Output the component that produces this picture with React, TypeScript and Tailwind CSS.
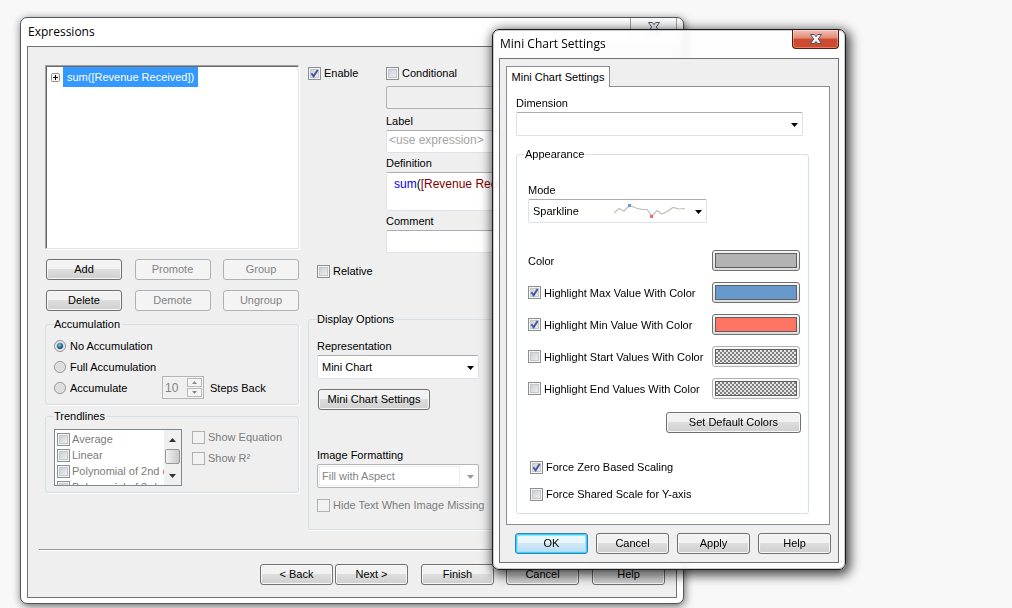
import React, { useId } from "react";

type CheckProps = {
  label: string;
  checked?: boolean;
  disabled?: boolean;
  framed?: boolean;
};

function Check({ label, checked = false, disabled = false, framed = false }: CheckProps) {
  return (
    <label
      className={
        framed
          ? "flex h-4 items-center gap-0.5 whitespace-nowrap text-[#7c7c7c]"
          : disabled
            ? "flex h-4 items-center gap-[3px] whitespace-nowrap text-[#7c7c7c]"
            : "flex h-4 items-center gap-[3px] whitespace-nowrap"
      }
    >
      <span className="grid size-[13px] shrink-0">
        <input
          type="checkbox"
          defaultChecked={checked}
          disabled={disabled}
          className={
            disabled && !framed
              ? "peer col-start-1 row-start-1 size-[13px] appearance-none border border-[#b1b1b1] bg-[#f2f2f2]"
              : "peer col-start-1 row-start-1 size-[13px] appearance-none border border-[#8e8f8f] bg-linear-to-br from-[#c3c9d1] to-[#f6f6f6] shadow-[inset_0_0_0_1px_#f4f4f4,inset_0_0_0_2px_#c4c8cc]"
          }
        />
        <svg
          viewBox="0 0 13 13"
          className="pointer-events-none invisible col-start-1 row-start-1 size-[13px] peer-checked:visible"
          aria-hidden="true"
        >
          <path d="M3.4 6.2 L5.6 9.2 L9.6 2.9" fill="none" stroke="#3f55a0" strokeWidth="1.9" />
        </svg>
      </span>
      {label}
    </label>
  );
}

function Radio({ label, checked = false }: { label: string; checked?: boolean }) {
  return (
    <label className="flex h-[21px] items-center gap-1 whitespace-nowrap">
      <input
        type="radio"
        name="accumulation"
        defaultChecked={checked}
        className="size-3 shrink-0 appearance-none rounded-full border border-[#8e8f8f] bg-[radial-gradient(circle,#d3d7da_0,#f0f0f0_70%)] shadow-[inset_0_0_0_1px_#f4f4f4,inset_0_0_0_2px_#d2d4d6] checked:bg-[radial-gradient(circle_at_45%_42%,#7fd0ee_0,#1f6f9f_30%,#123a59_48%,#e4e6e8_56%)]"
      />
      {label}
    </label>
  );
}

function Push({
  children,
  disabled = false,
  primary = false,
  className = "",
}: {
  children: React.ReactNode;
  disabled?: boolean;
  primary?: boolean;
  className?: string;
}) {
  const look = primary
    ? "border-[#3c7fb1] bg-linear-to-b from-[#eaf6fd] from-45% via-[#d0e8f5] via-50% to-[#b5dcf2] shadow-[inset_0_0_0_1px_#2bd5fb,inset_0_0_0_2px_#9be6fa]"
    : disabled
      ? "border-[#adb2b5] bg-[#f4f4f4] text-[#838383]"
      : "border-[#707070] bg-linear-to-b from-[#f2f2f2] from-45% via-[#dddddd] via-50% to-[#cfcfcf] shadow-[inset_0_0_0_1px_#f8f8f8]";
  return (
    <button
      type="button"
      disabled={disabled}
      className={`h-[21px] rounded-[3px] border text-center leading-[19px] whitespace-nowrap ${look} ${className}`}
    >
      {children}
    </button>
  );
}

function Arrow({ muted = false }: { muted?: boolean }) {
  return (
    <svg
      viewBox="0 0 7 4"
      className="pointer-events-none absolute top-[11px] right-[5px] h-1 w-[7px]"
      fill={muted ? "#9a9a9a" : "#000"}
      aria-hidden="true"
    >
      <path d="M0 0H7L3.5 4Z" />
    </svg>
  );
}

function Combo({
  label,
  value,
  disabled = false,
  className = "",
  children,
}: {
  label: string;
  value: string;
  disabled?: boolean;
  className?: string;
  children?: React.ReactNode;
}) {
  const id = useId();
  return (
    <div className={className}>
      <label htmlFor={id} className="block h-[17px] leading-4">
        {label}
      </label>
      <div className="relative">
        <select
          id={id}
          disabled={disabled}
          className={
            disabled
              ? "block h-6 w-full appearance-none rounded-[2px] border border-[#b1b5b8] bg-white pl-1 text-[#838383] opacity-100"
              : "block h-6 w-full appearance-none rounded-[2px] border border-[#dde2ea] border-t-[#abadb3] bg-white pl-1"
          }
        >
          <option>{value}</option>
        </select>
        {disabled && (
          <span className="pointer-events-none absolute inset-y-0.5 right-[19px] left-0.5 border border-[#ececec]" />
        )}
        {children}
        <Arrow muted={disabled} />
      </div>
    </div>
  );
}

function Swatch({ label, color, disabled = false }: { label: string; color: string; disabled?: boolean }) {
  return (
    <button
      type="button"
      aria-label={label}
      disabled={disabled}
      className={
        disabled
          ? "h-[21px] w-[88px] rounded-[3px] border border-[#adb2b5] bg-[#f8f8f8] p-0.5"
          : "h-[21px] w-[88px] rounded-[3px] border border-[#707070] bg-linear-to-b from-[#f6f6f6] to-[#dcdcdc] p-0.5"
      }
    >
      <span className={`block h-[15px] border border-[#5f5f5f] ${color}`} />
    </button>
  );
}

const hatch = "bg-[repeating-conic-gradient(#808080_0_25%,#e4e4e4_0_50%)] bg-size-[4px_4px]";

const swatches = [
  { label: "Highlight Max Value With Color", color: "bg-[#6899cc]", on: true },
  { label: "Highlight Min Value With Color", color: "bg-[#ff7462]", on: true },
  { label: "Highlight Start Values With Color", color: hatch, on: false },
  { label: "Highlight End Values With Color", color: hatch, on: false },
];

function CloseGlyph() {
  return (
    <svg viewBox="0 0 12 10" className="h-2.5 w-3" aria-hidden="true">
      <path
        d="M.5 .5H4.300L6 2.600L7.700 .5H11.500L8.300 5L11.500 9.500H7.700L6 7.400L4.300 9.500H.5L3.700 5Z"
        fill="#f4f4f4"
        stroke="#4f5468"
        strokeWidth="1"
        strokeLinejoin="round"
      />
    </svg>
  );
}

const groupBox = "rounded-[3px] border border-[#d5dfe5] shadow-[1px_1px_0_#fff]";
const field = "block w-full rounded-[2px] border border-[#dde2ea] border-t-[#abadb3] bg-white";

function TextField({ label, placeholder = "" }: { label: string; placeholder?: string }) {
  const id = useId();
  return (
    <div className="mt-0.5">
      <label htmlFor={id} className="block h-[17px] leading-4">
        {label}
      </label>
      <input
        id={id}
        placeholder={placeholder}
        className={`${field} h-[23px] px-0.5 pb-[3px] text-[12px] placeholder:text-[#a5a5a5]`}
      />
    </div>
  );
}

function ExpressionsWindow() {
  return (
    <section
      aria-label="Expressions"
      className="absolute top-[17px] left-[20px] w-[664px] rounded-[7px] border border-[#55585b] bg-white px-[6px] pb-[5px] shadow-[1px_2px_8px_rgba(0,0,0,0.6)]"
    >
      <header className="flex h-7 items-start justify-between pl-px">
        <h1 className="font-['Open_Sans',sans-serif] text-[12px] leading-[27px]">Expressions</h1>
        <button
          type="button"
          aria-label="Close"
          className="flex h-[18px] w-[47px] items-center justify-center rounded-b-[4px] border border-t-0 border-[#a0a0a0] bg-[#fcfcfc]"
        >
          <CloseGlyph />
        </button>
      </header>

      <div className="border border-[#6f7173] bg-[#efefef] pb-3">
        <div className="flex gap-[9px] pt-[18px] pr-[10px] pl-[17px]">
          <div className="w-[254px]">
            <div className="flex h-[184px] items-start gap-px border border-t-[#a0a0a0] border-r-[#e3e3e3] border-b-[#e3e3e3] border-l-[#a0a0a0] bg-white pt-px pl-[5px] shadow-[inset_1px_1px_0_#696969,1px_1px_0_#fff]">
              <button type="button" aria-label="Expand" className="mt-1.5 mr-0.5 size-[9px]">
                <svg viewBox="0 0 9 9" className="size-[9px]" aria-hidden="true">
                  <rect x=".5" y=".5" width="8" height="8" rx="1" fill="#f2f2f2" stroke="#919191" />
                  <path d="M2 4.5H7M4.5 2V7" stroke="#000" fill="none" />
                </svg>
              </button>
              <button
                type="button"
                className="h-5 bg-[#3399ff] px-1 text-left leading-5 text-white"
              >
                sum([Revenue Received])
              </button>
            </div>

            <div className="mt-2.5 ml-px grid grid-cols-[76px_76px_76px] justify-between gap-y-2.5">
              <Push>Add</Push>
              <Push disabled>Promote</Push>
              <Push disabled>Group</Push>
              <Push>Delete</Push>
              <Push disabled>Demote</Push>
              <Push disabled>Ungroup</Push>
            </div>

            <fieldset className={`mt-[5px] px-2 pt-[3px] pb-1.5 ${groupBox}`}>
              <legend className="pr-0.5 leading-4">Accumulation</legend>
              <Radio label="No Accumulation" checked />
              <Radio label="Full Accumulation" />
              <div className="flex h-[21px] items-center">
                <div className="w-[108px]">
                  <Radio label="Accumulate" />
                </div>
                <div className="flex h-[23px] w-[42px] border border-[#b1b5b8] bg-[#f4f4f4] p-px">
                  <input
                    aria-label="Steps Back"
                    defaultValue="10"
                    disabled
                    className="w-[23px] min-w-0 bg-[#efefef] pl-px text-[12px] text-[#838383]"
                  />
                  <div className="flex flex-col justify-between">
                    <button
                      type="button"
                      disabled
                      aria-label="More steps"
                      className="flex h-[9px] w-[15px] items-center justify-center border border-[#b9b9b9]"
                    >
                      <svg viewBox="0 0 5 3" className="h-[3px] w-[5px]" aria-hidden="true">
                        <path d="M0 3H5L2.5 0Z" fill="#8a8a8a" />
                      </svg>
                    </button>
                    <button
                      type="button"
                      disabled
                      aria-label="Fewer steps"
                      className="flex h-[9px] w-[15px] items-center justify-center border border-[#b9b9b9]"
                    >
                      <svg viewBox="0 0 5 3" className="h-[3px] w-[5px]" aria-hidden="true">
                        <path d="M0 0H5L2.5 3Z" fill="#8a8a8a" />
                      </svg>
                    </button>
                  </div>
                </div>
                <span className="pl-1.5">Steps Back</span>
              </div>
            </fieldset>

            <fieldset className={`mt-[3px] flex items-start gap-2.5 px-2 pt-[5px] pb-1.5 ${groupBox}`}>
              <legend className="pr-0.5 leading-4">Trendlines</legend>
              <div className="flex h-[57px] w-32 overflow-hidden border border-[#828790] bg-white">
                <div className="flex-1 overflow-hidden pt-px pl-0.5">
                  <Check label="Average" disabled framed />
                  <Check label="Linear" disabled framed />
                  <Check label="Polynomial of 2nd degree" disabled framed />
                  <Check label="Polynomial of 3rd degree" disabled framed />
                </div>
                <div className="flex w-[17px] flex-col items-center bg-[#f0f0f0]">
                  <svg viewBox="0 0 7 4" className="mt-2 h-1 w-[7px]" aria-hidden="true">
                    <path d="M0 4H7L3.5 0Z" fill="#333" />
                  </svg>
                  <span className="mt-[7px] block h-[15px] w-[15px] rounded-[2px] border border-[#979797] bg-linear-to-r from-[#f4f4f4] to-[#c8c8c8]" />
                  <svg viewBox="0 0 7 4" className="mt-2.5 h-1 w-[7px]" aria-hidden="true">
                    <path d="M0 0H7L3.5 4Z" fill="#333" />
                  </svg>
                </div>
              </div>
              <div className="flex flex-col gap-[5px]">
                <Check label="Show Equation" disabled />
                <Check label="Show R²" disabled />
              </div>
            </fieldset>
          </div>

          <div className="flex-1">
            <div className="flex">
              <div className="w-[78px]">
                <Check label="Enable" checked />
              </div>
              <div className="flex-1">
                <Check label="Conditional" />
                <input
                  aria-label="Condition"
                  disabled
                  className="mt-[5px] mb-1 block h-[23px] w-full rounded-[2px] border border-[#afb1b4] bg-[#efefef]"
                />
                <TextField label="Label" placeholder="<use expression>" />
                <div className="mt-0.5">
                  <span id="definition-label" className="block h-[17px] leading-4">
                    Definition
                  </span>
                  <div
                    role="textbox"
                    aria-labelledby="definition-label"
                    contentEditable
                    suppressContentEditableWarning
                    className={`${field} h-[39px] overflow-hidden pt-0.5 pl-[7px] text-[12px] leading-[18px] whitespace-nowrap`}
                  >
                    <span className="text-[#0000ff]">sum</span>(
                    <span className="text-[#800000]">[Revenue Received]</span>)
                  </div>
                </div>
                <TextField label="Comment" />
              </div>
            </div>

            <div className="mt-2.5 pl-[9px]">
              <Check label="Relative" />
            </div>

            <fieldset className={`mt-8 px-2 pt-[11px] pb-4 ${groupBox}`}>
              <legend className="pr-px leading-4">Display Options</legend>
              <Combo label="Representation" value="Mini Chart" className="w-[162px]" />
              <Push className="mt-2.5 ml-px w-28">Mini Chart Settings</Push>
              <Combo
                label="Image Formatting"
                value="Fill with Aspect"
                disabled
                className="mt-[37px] mb-[9px] w-[162px]"
              />
              <Check label="Hide Text When Image Missing" disabled />
            </fieldset>
          </div>
        </div>

        <hr className="mt-[19px] mr-[10px] ml-[11px] border-t border-[#9a9a9a] shadow-[0_1px_0_#fff]" />

        <div className="mt-3.5 flex justify-end pr-[11px]">
          <Push className="w-[73px]">&lt; Back</Push>
          <Push className="ml-0.5 w-[73px]">Next &gt;</Push>
          <Push className="ml-[13px] w-[73px]">Finish</Push>
          <Push className="ml-3 w-[73px]">Cancel</Push>
          <Push className="ml-[13px] w-[73px]">Help</Push>
        </div>
      </div>
    </section>
  );
}

function MiniChartWindow() {
  return (
    <section
      role="dialog"
      aria-label="Mini Chart Settings"
      className="absolute top-[29px] left-[492px] w-[354px] rounded-[7px] border border-[#1c1d1e] bg-white/85 px-1.5 pb-1.5 shadow-[inset_0_0_0_1px_#c9cbcd,2px_3px_12px_2px_rgba(0,0,0,0.75)] backdrop-blur-[3px]"
    >
      <header className="flex h-7 items-start justify-between pl-px">
        <h2 className="font-['Open_Sans',sans-serif] text-[12px] leading-[28px]">Mini Chart Settings</h2>
        <button
          type="button"
          aria-label="Close"
          className="flex h-[19px] w-[47px] items-center justify-center rounded-b-[4px] border border-t-0 border-[#5a1a12] bg-linear-to-b from-[#f3c0b4] from-0% via-[#e08a78] via-45% to-[#cf4a30] to-50% shadow-[inset_0_0_0_1px_rgba(255,255,255,0.3)]"
        >
          <CloseGlyph />
        </button>
      </header>

      <div className="border border-[#6f7173] bg-[#efefef] px-1.5 pt-[7px] pb-2">
        <div role="tablist" className="flex">
          <button
            type="button"
            role="tab"
            aria-selected="true"
            className="z-10 -mb-px h-[21px] w-[104px] border border-b-0 border-[#8b8d93] bg-white text-center leading-[19px] whitespace-nowrap"
          >
            Mini Chart Settings
          </button>
        </div>
        <div role="tabpanel" className="mr-0.5 border border-[#8b8d93] bg-white px-[9px] pt-2 pb-2.5">
          <Combo label="Dimension" value="" className="w-[287px]" />

          <fieldset className="mt-2.5 w-[293px] rounded-[3px] border border-[#d5dfe5] pr-2 pb-[11px] pl-[11px]">
            <legend className="-ml-1 px-px leading-4">Appearance</legend>
            <Combo label="Mode" value="Sparkline" className="mt-5 w-[179px]">
              <svg
                viewBox="0 0 72 16"
                className="pointer-events-none absolute top-1 right-[21px] h-4 w-[72px]"
                aria-hidden="true"
              >
                <path
                  d="M0 10L5 5.500L10 8L15.500 2.500L22 5L28 6.500L33 6.500L38 13L43 7.500L48 11L54 8L59 4.500L65 6L71 5.500"
                  fill="none"
                  stroke="#bdbdbd"
                  strokeWidth="1.2"
                />
                <rect x="14" y="1" width="3" height="3" fill="#6899cc" />
                <rect x="36" y="12" width="3" height="3" fill="#ff6a58" />
              </svg>
            </Combo>

            <div className="mt-[27px] flex flex-col gap-[11px]">
              <div className="flex items-center justify-between">
                <span>Color</span>
                <Swatch label="Color" color="bg-[#b3b3b3]" />
              </div>
              {swatches.map((s) => (
                <div key={s.label} className="flex items-center justify-between">
                  <Check label={s.label} checked={s.on} />
                  <Swatch label={s.label} color={s.color} disabled={!s.on} />
                </div>
              ))}
            </div>

            <div className="mt-[13px] -mr-px flex justify-end">
              <Push className="w-[135px]">Set Default Colors</Push>
            </div>

            <div className="mt-[26px] flex flex-col gap-[11px] pl-0.5">
              <Check label="Force Zero Based Scaling" checked />
              <Check label="Force Shared Scale for Y-axis" />
            </div>
          </fieldset>
        </div>

        <div className="mt-2 flex justify-end gap-2 pr-px">
          <Push primary className="w-[73px]">
            OK
          </Push>
          <Push className="w-[73px]">Cancel</Push>
          <Push className="w-[73px]">Apply</Push>
          <Push className="w-[73px]">Help</Push>
        </div>
      </div>
    </section>
  );
}

export default function App() {
  return (
    <main className="relative min-h-screen w-full overflow-hidden bg-[#f8f8f8] font-['Liberation_Sans',Arial,sans-serif] text-[11px] leading-4 text-black">
      <ExpressionsWindow />
      <MiniChartWindow />
    </main>
  );
}
